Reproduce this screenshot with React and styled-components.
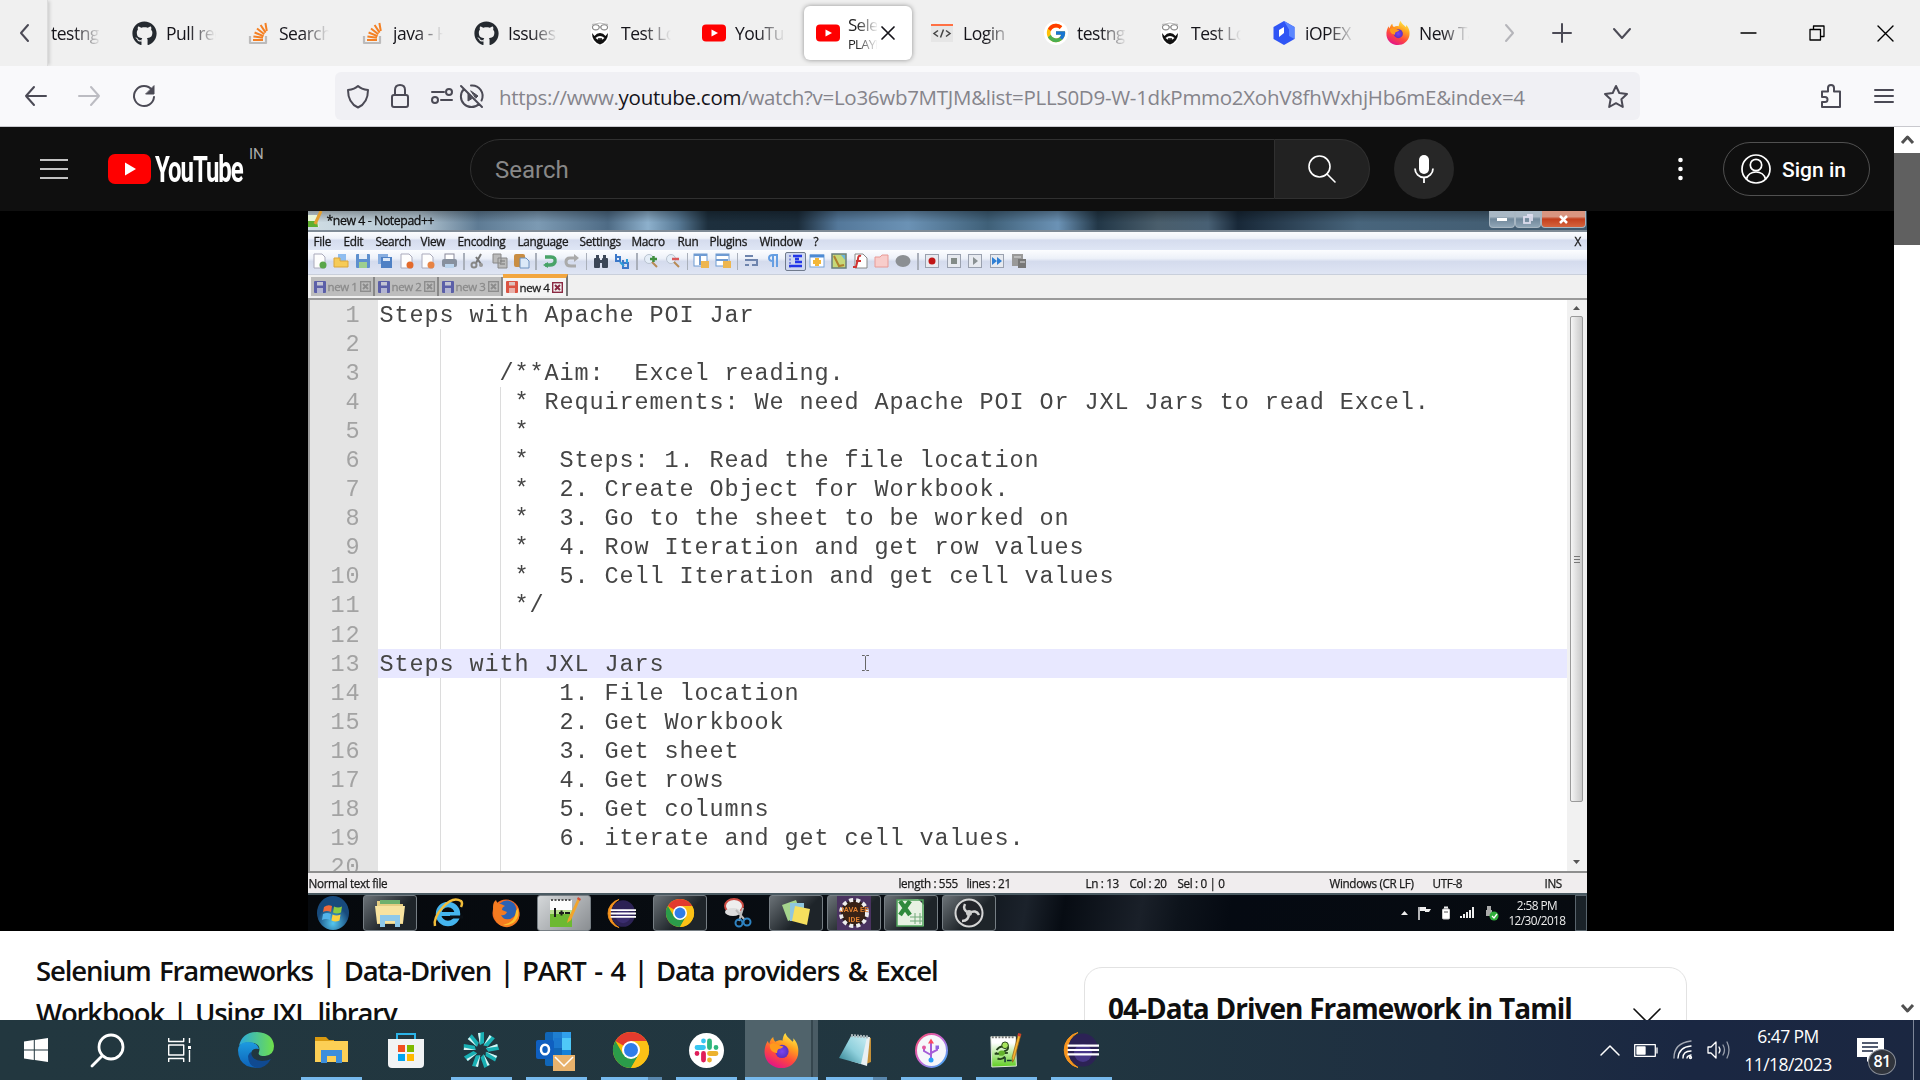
import React from "react";
import styled, { createGlobalStyle, css } from "styled-components";
import { FaGithub } from "react-icons/fa";
import { FcGoogle } from "react-icons/fc";

const UI = '"Open Sans", "Noto Sans", sans-serif';
const MONO = '"Liberation Mono", monospace';

const Global = createGlobalStyle`
  * { box-sizing: border-box; }
  html, body { margin: 0; padding: 0; overflow: hidden; background: #fff; }
  svg { display: block; flex: none; overflow: visible; }
`;

const Screen = styled.div`
  width: 1920px;
  height: 1080px;
  display: flex;
  flex-direction: column;
  overflow: hidden;
  font-family: ${UI};
`;

/* ---------- icons ---------- */
const Icon = ({ w = 24, h = w, vb = `0 0 ${w} ${h}`, stroke = "#4b4a55", sw = 2, children, ...rest }) => (
  <svg width={w} height={h} viewBox={vb} fill="none" stroke={stroke} strokeWidth={sw} strokeLinecap="round" strokeLinejoin="round" preserveAspectRatio="none" {...rest}>
    {children}
  </svg>
);

const StackIcon = () => (
  <Icon vb="0 0 24 24" strokeLinecap="butt">
    <path d="M4 15v7h16v-7" stroke="#bcbbbb" strokeWidth="2.200" strokeLinecap="butt" />
    <g stroke="#f48024" strokeWidth="2" strokeLinecap="butt">
      <path d="M7 19h10M7.400 15.400l9.600 1.400M8.600 11.500l9 3.600M11 7.500l7.300 5.700M14.600 4l5 7.600M19.400 2l1.400 8" />
    </g>
  </Icon>
);
const BeardIcon = () => (
  <svg width="24" height="24" viewBox="0 0 24 24">
    <ellipse cx="12" cy="12" rx="9.500" ry="12" fill="#fff" />
    <path d="M4 3.500q8-3 16 0" stroke="#bbb" fill="none" />
    <ellipse cx="7.800" cy="6.300" rx="3.300" ry="2.600" fill="none" stroke="#888" strokeWidth="1.100" />
    <ellipse cx="16.200" cy="6.300" rx="3.300" ry="2.600" fill="none" stroke="#888" strokeWidth="1.100" />
    <path d="M11 6h2" stroke="#888" />
    <path d="M4 12l2.500 3q2.200-3 5.500-3t5.500 3l2.500-3q0 8.500-8 11.500Q4 20.500 4 12z" fill="#111" />
    <path d="M7.500 17q4.500-4 9 0l-2 1.500h-5z" fill="#fff" />
    <path d="M10 18h4" stroke="#111" strokeWidth="1.500" />
  </svg>
);
const YtIcon = () => (
  <svg width="24" height="24" viewBox="0 0 24 24">
    <rect x="0" y="3.500" width="24" height="17" rx="4" fill="#f00" />
    <path d="M9.500 8.500l6.500 3.500-6.500 3.500z" fill="#fff" />
  </svg>
);
const CodeIcon = () => (
  <svg width="24" height="24" viewBox="0 0 24 24">
    <rect x="1" y="3" width="22" height="18" fill="#e6e6e6" />
    <rect x="1" y="3" width="22" height="2" fill="#ff7043" />
    <path d="M8 9.500L4 12.500l4 3M16 9.500L20 12.500l-4 3M13.500 8.500l-3 8" stroke="#444" strokeWidth="1.500" fill="none" />
  </svg>
);
const GoogleFav = styled.span`
  display: flex;
  width: 24px;
  height: 24px;
  border-radius: 50%;
  background: #fff;
  align-items: center;
  justify-content: center;
  flex: none;
`;
const IopexIcon = () => (
  <svg width="24" height="24" viewBox="0 0 24 24">
    <path d="M12 0l10.500 6v12L12 24 1.500 18V6z" fill="#2f55f5" />
    <path d="M12 0l10.500 6v12L17 15V8.500z" fill="#5b86ff" />
    <path d="M7 9l5-3v6l-5 4z" fill="#fff" />
  </svg>
);
const Firefox = ({ size = 24, h = size }) => (
  <svg width={size} height={h} viewBox="0 0 36 36" preserveAspectRatio="none">
    <defs>
      <linearGradient id="ffa" x1=".8" y1="0" x2=".3" y2="1">
        <stop offset="0" stopColor="#fff44f" /><stop offset=".35" stopColor="#ffa01f" />
        <stop offset=".65" stopColor="#ff4a3c" /><stop offset="1" stopColor="#e3128a" />
      </linearGradient>
      <radialGradient id="ffb"><stop offset="0" stopColor="#7b45f0" /><stop offset="1" stopColor="#5b2fc0" /></radialGradient>
    </defs>
    <path d="M22 0c1 4 5 6 7.500 9 1-1 .8-2 .5-3.500 5 5 6 11 5 17C33 31 26 36 18 36S2 31 .8 22C0 16 2 11 4 8c.3 1.500.8 2.500 1.500 3C6 8 7.500 5.500 9.500 4c0 2 1 4 2.500 5 2-1.500 5-2 7-1 .5-3 1-6 3-8z" fill="url(#ffa)" />
    <circle cx="18.500" cy="19" r="6.800" fill="url(#ffb)" />
    <path d="M6 12c3-3 7-1 10 .5 1 1 3 1 4 1-1 2-3 2.500-5 3-1.500 1-1.500 3-1.500 4-3 0-8-2-7.500-8.500z" fill="#ff9a1c" />
  </svg>
);
const Chrome = ({ size = 36 }) => (
  <svg width={size} height={size} viewBox="0 0 36 36">
    <circle cx="18" cy="18" r="18" fill="#fbbc04" />
    <path d="M18 18L2.400 9A18 18 0 0 1 33.600 9H18z" fill="#e33b2e" />
    <path d="M2.400 9A18 18 0 0 0 18 36l7.800-13.500L18 18 10.200 22.500z" fill="#2b9c4a" />
    <path d="M18 9h15.600A18 18 0 0 1 18 36l7.800-13.500z" fill="#fbc116" />
    <circle cx="18" cy="18" r="9" fill="#fff" /><circle cx="18" cy="18" r="7" fill="#2f7de9" />
  </svg>
);
const Eclipse = ({ size = 36, soft }) => (
  <svg width={size} height={size} viewBox="0 0 36 36">
    <path d="M15 .5A18 18 0 0 0 15 35.500 20 20 0 0 1 15 .5z" fill="#f7941e" stroke="#f7941e" />
    <ellipse cx="20" cy="18" rx="15" ry="16.500" fill="#2c2255" />
    <ellipse cx="20" cy="21" rx="9" ry="9" fill="#473788" opacity={soft ? 0.5 : 1} />
    <path d="M4.500 13.700h31.500M4.500 18h31.500M4.500 22.300h31.500" stroke="#fff" strokeWidth="2.200" />
  </svg>
);
const NppIcon = ({ size = 36 }) => (
  <svg width={size} height={size} viewBox="0 0 36 36">
    <defs><linearGradient id="npp" x1="0" y1="0" x2="0" y2="1"><stop offset=".2" stopColor="#fff" /><stop offset="1" stopColor="#5fce20" /></linearGradient></defs>
    <path d="M2 4h26l1 31-26 1z" fill="url(#npp)" stroke="#e6eee0" />
    <path d="M3 4.500h24" stroke="#777" strokeWidth="2" strokeDasharray="2 1.500" />
    <path d="M8 18q5-6 10-2m-2-3q3-3 4 1t-3 5q-6 5-10 2m2 6q5 2 8-2M6 22l14-1" stroke="#24421a" strokeWidth="2" fill="none" />
    <circle cx="17" cy="13" r="3.500" fill="#a8e55b" stroke="#24421a" />
    <path d="M10 20q4-3 7 0 0 5-6 4z" fill="#63b32b" />
    <path d="M34 1l-7 26-2 4-.5-5L31 1z" fill="#f5b331" stroke="#8b5a13" strokeWidth=".7" />
    <path d="M31 0l3 1-.7 3-3-1z" fill="#cf3b31" />
    <path d="M17 26v5m2-2h5" stroke="#133" strokeWidth="1.600" />
  </svg>
);
const Npp7 = () => (
  <svg width="34" height="32" viewBox="0 0 34 32">
    <path d="M3 3h22v27H3z" fill="#fdfdfd" />
    <path d="M3 13h22v17H3z" fill="#6db932" />
    <path d="M3 13h22v4H3z" fill="#b9e08f" />
    <path d="M4 3h20" stroke="#555" strokeWidth="2" strokeDasharray="2 1.500" />
    <path d="M8 11v9M12 16h5M14.500 13.500v5M18 16h5" stroke="#1c1c1c" strokeWidth="2" />
    <path d="M31 1L21 22l-1 4 4-3L33 3z" fill="#f2a52c" />
    <path d="M31 0l3 2-1 2-3-2z" fill="#d04f3c" />
  </svg>
);

/* ---------- tab strip ---------- */
const TabStrip = styled.div`
  height: 66px;
  flex: none;
  display: flex;
  align-items: center;
  background: #f0f0f0;
`;
const ScrollBack = styled.div`
  width: 48px;
  flex: none;
  height: 66px;
  display: flex;
  align-items: center;
  padding-left: 20px;
  border-right: 1px solid #dcdcdc;
  box-shadow: 3px 0 3px -1px #cfcfcf;
`;
const Tab = styled.div`
  width: ${(p) => p.$w || 114}px;
  flex: none;
  height: 66px;
  display: flex;
  align-items: center;
  gap: 9px;
  padding-left: ${(p) => (p.$w ? 3 : 12)}px;
`;
const TabLabel = styled.div`
  width: 50px;
  overflow: hidden;
  white-space: nowrap;
  font-size: 17.5px;
  letter-spacing: -0.5px;
  line-height: 28px;
  color: #15141a;
  mask-image: linear-gradient(90deg, #000 45%, transparent 100%);
`;
const ActiveTab = styled.div`
  width: 108px;
  flex: none;
  height: 54px;
  margin-right: 6px;
  padding-left: 12px;
  display: flex;
  align-items: center;
  background: #fff;
  border-radius: 6px;
  box-shadow: 0 0 5px rgba(0, 0, 0, 0.4);
`;
const ActiveText = styled.div`
  width: 29px;
  margin: 0 5px 0 8px;
  overflow: hidden;
  white-space: nowrap;
  color: #222;
  font-size: 17px;
  line-height: 21px;
  letter-spacing: -0.7px;
  mask-image: linear-gradient(90deg, #000 30%, transparent 105%);
  small {
    display: block;
    font-size: 13px;
    line-height: 18px;
  }
`;
const StripButton = styled.div`
  width: ${(p) => p.$w}px;
  margin-left: ${(p) => p.$gap || 0}px;
  flex: none;
  height: 66px;
  display: flex;
  align-items: center;
  justify-content: center;
`;

const leftTabs = [
  [<FaGithub size={25} color="#24292f" />, "Pull requests"],
  [<StackIcon />, "Search"],
  [<StackIcon />, "java - H"],
  [<FaGithub size={25} color="#24292f" />, "Issues ·"],
  [<BeardIcon />, "Test Login"],
  [<YtIcon />, "YouTube"],
];
const rightTabs = [
  [<CodeIcon />, "Login |"],
  [<GoogleFav><FcGoogle size={22} /></GoogleFav>, "testng m"],
  [<BeardIcon />, "Test Login"],
  [<IopexIcon />, "iOPEX T"],
  [<Firefox />, "New Tab"],
];

const Tabs = () => (
  <TabStrip>
    <ScrollBack><Icon w={9} h={18} vb="0 0 9 18"><path d="M8 1L1 9l7 8" /></Icon></ScrollBack>
    <Tab $w={72}><TabLabel>testng</TabLabel></Tab>
    {leftTabs.map(([icon, t], i) => <Tab key={i}>{icon}<TabLabel>{t}</TabLabel></Tab>)}
    <ActiveTab>
      <YtIcon />
      <ActiveText>Selenium<small>PLAYING</small></ActiveText>
      <Icon w={12} stroke="#15141a" sw={1.700}><path d="M0 0l12 12M12 0L0 12" /></Icon>
    </ActiveTab>
    {rightTabs.map(([icon, t], i) => <Tab key={i}>{icon}<TabLabel>{t}</TabLabel></Tab>)}
    <StripButton $w={42}><Icon w={9} h={18} stroke="#b5b5ba"><path d="M1 1l7 8-7 8" /></Icon></StripButton>
    <StripButton $w={64}><Icon w={18}><path d="M9 0v18M0 9h18" /></Icon></StripButton>
    <StripButton $w={56}><Icon w={18} h={9}><path d="M1 0l8 9 8-9" /></Icon></StripButton>
    <StripButton $w={69} $gap={64}><Icon w={15} h={2} stroke="#000" sw={1.300}><path d="M0 1h15" /></Icon></StripButton>
    <StripButton $w={68}><Icon w={14} stroke="#000" sw={1.300}><path d="M0 3.500h10.500V14H0zM3.500 3.500V0H14v10.500h-3.500" /></Icon></StripButton>
    <StripButton $w={69}><Icon w={15} stroke="#000" sw={1.400}><path d="M0 0l15 15M15 0L0 15" /></Icon></StripButton>
  </TabStrip>
);

/* ---------- navigation bar ---------- */
const NavBar = styled.div`
  height: 61px;
  flex: none;
  display: flex;
  align-items: center;
  background: #f9f9fb;
  border-bottom: 1px solid #c9c9ce;
  padding: 0 27px 0 25px;
`;
const NavButtons = styled.div`
  width: 310px;
  display: flex;
  align-items: center;
  gap: 33px;
`;
const UrlBar = styled.div`
  width: 1305px;
  height: 48px;
  display: flex;
  align-items: center;
  padding: 0 12px;
  background: #f0f0f4;
  border-radius: 6px;
`;
const UrlIcons = styled.div`
  width: 152px;
  display: flex;
  align-items: center;
  gap: 22px;
  svg:last-child { margin-left: -15px; }
`;
const UrlText = styled.div`
  flex: 1;
  padding-top: 2px;
  white-space: nowrap;
  font-size: 20.5px;
  line-height: 28px;
  letter-spacing: -0.28px;
  color: #85848b;
  b { font-weight: 400; color: #15141a; }
`;
const NavRight = styled.div`
  flex: 1;
  display: flex;
  align-items: center;
  justify-content: flex-end;
  gap: 34px;
`;

const Navigation = () => (
  <NavBar>
    <NavButtons>
      <Icon w={21} h={18}><path d="M21 9H1M9 0L1 9l8 9" /></Icon>
      <Icon w={21} h={18} stroke="#bcbcc2"><path d="M0 9h20M12 0l8 9-8 9" /></Icon>
      <Icon w={22} h={22}><path d="M19 5A10 10 0 1 0 21 12" /><path d="M21 1v8h-8z" fill="#4b4a55" strokeWidth="1" /></Icon>
    </NavButtons>
    <UrlBar>
      <UrlIcons>
        <Icon w={22} h={23}><path d="M11 1c3 3 6 3.500 10 4 0 8-2 14-10 17.500C3 19 1 13 1 5c4-.5 7-1 10-4z" /></Icon>
        <Icon w={18} h={24}><rect x="1" y="11" width="16" height="12" rx="2" /><path d="M4 11V6q0-5 5-5t5 5v5" /></Icon>
        <Icon w={22} h={16}><path d="M1 4h12M10 12h11" /><circle cx="18" cy="4" r="3" /><circle cx="4" cy="12" r="3" /></Icon>
        <Icon w={24} h={24}><path d="M4 5a10.500 10.500 0 0 0 15 15M11 1.500a10.500 10.500 0 0 1 10.500 15M1 2l21 21" /><path d="M8 9v8l4-2.500M11 7l7 5-2 2z" fill="#4b4a55" strokeWidth="1" /></Icon>
      </UrlIcons>
      <UrlText>https://www.<b>youtube.com</b>/watch?v=Lo36wb7MTJM&amp;list=PLLS0D9-W-1dkPmmo2XohV8fhWxhjHb6mE&amp;index=4</UrlText>
      <Icon w={24} h={23}><path d="M12 1l3.300 7 7.700 1-5.600 5.300L18.800 22 12 18.200 5.200 22l1.400-7.700L1 9l7.700-1z" /></Icon>
    </UrlBar>
    <NavRight>
      <Icon w={20} h={24}><path d="M1 9V7.500h6V4q0-3 3-3t3 3v3.500h6V23H1v-5h3q2.500 0 2.500-2.500T4 13H1V9" /></Icon>
      <Icon w={18} h={14}><path d="M0 1h18M0 7h18M0 13h18" /></Icon>
    </NavRight>
  </NavBar>
);

/* ---------- youtube header ---------- */
const Content = styled.div`
  height: 893px;
  flex: none;
  display: flex;
`;
const Page = styled.div`
  width: 1894px;
  height: 893px;
  overflow: hidden;
`;
const Masthead = styled.div`
  height: 84px;
  display: flex;
  align-items: center;
  padding: 0 24px 0 40px;
  background: #0f0f0f;
  font-family: Roboto, sans-serif;
`;
const Brand = styled.div`
  width: 362px;
  margin-left: 40px;
  display: flex;
  align-items: center;
`;
const Wordmark = styled.div`
  width: 98px;
  padding-left: 4px;
  span {
    display: block;
    width: 140px;
    padding-top: 1px;
    font-size: 36px;
    font-weight: 700;
    line-height: 40px;
    letter-spacing: -1.5px;
    color: #fff;
    transform: scaleX(0.665);
    transform-origin: left;
  }
`;
const Region = styled.div`
  align-self: flex-start;
  margin-top: -2px;
  font-size: 15px;
  line-height: 14px;
  color: #aaa;
`;
const SearchInput = styled.div`
  width: 805px;
  height: 60px;
  padding-left: 24px;
  line-height: 60px;
  font-size: 24px;
  color: #888;
  background: #121212;
  border: 1px solid #303030;
  border-radius: 30px 0 0 30px;
`;
const SearchButton = styled.div`
  width: 95px;
  height: 60px;
  display: flex;
  align-items: center;
  justify-content: center;
  background: #222;
  border: 1px solid #303030;
  border-left: 0;
  border-radius: 0 30px 30px 0;
`;
const Mic = styled.div`
  width: 60px;
  height: 60px;
  margin: 0 auto 0 24px;
  border-radius: 50%;
  background: #272727;
  display: flex;
  align-items: center;
  justify-content: center;
`;
const SignIn = styled.div`
  width: 147px;
  height: 54px;
  margin-left: 40px;
  padding-left: 17px;
  display: flex;
  align-items: center;
  gap: 11px;
  border: 1px solid #505050;
  border-radius: 27px;
  font-size: 21px;
  font-weight: 500;
  line-height: 28px;
  color: #fff;
  white-space: nowrap;
  span { padding-top: 2px; }
`;

const Header = () => (
  <Masthead>
    <Icon w={28} h={20} stroke="#fff" sw={1.700} strokeLinecap="butt"><path d="M0 1h28M0 10h28M0 19h28" /></Icon>
    <Brand>
      <svg width="43" height="30" viewBox="0 0 43 30"><rect width="43" height="30" rx="7" fill="#f00" /><path d="M17 8.500L28 15l-11 6.500z" fill="#fff" /></svg>
      <Wordmark><span>YouTube</span></Wordmark>
      <Region>IN</Region>
    </Brand>
    <SearchInput>Search</SearchInput>
    <SearchButton><Icon w={28} h={28} stroke="#fff" sw={1.600}><circle cx="11.500" cy="11.500" r="10.500" /><path d="M19 19l8 8" /></Icon></SearchButton>
    <Mic>
      <svg width="20" height="28" viewBox="0 0 20 28"><rect x="5" y="0" width="10" height="19" rx="5" fill="#fff" /><path d="M1 13.500a9 9 0 0 0 18 0M10 22.500V28" stroke="#fff" strokeWidth="1.800" fill="none" /></svg>
    </Mic>
    <svg width="5" height="24" viewBox="0 0 5 24" fill="#fff"><circle cx="2.500" cy="3" r="2.300" /><circle cx="2.500" cy="12" r="2.300" /><circle cx="2.500" cy="21" r="2.300" /></svg>
    <SignIn>
      <Icon w={30} stroke="#fff" sw={1.700}><circle cx="15" cy="15" r="14" /><circle cx="15" cy="11" r="5.700" /><path d="M5.500 25q2-7 9.500-7t9.500 7" /></Icon>
      <span>Sign in</span>
    </SignIn>
  </Masthead>
);

/* ---------- video: notepad++ ---------- */
const Stage = styled.div`
  height: 720px;
  background: #000;
  display: flex;
  justify-content: center;
`;
const Frame = styled.div`
  width: 1279px;
  height: 720px;
  overflow: hidden;
  display: flex;
  flex-direction: column;
  background: #fff;
  filter: blur(0.5px);
  color: #1a1a1a;
`;
const AeroTitle = styled.div`
  height: 21px;
  flex: none;
  display: flex;
  align-items: flex-start;
  font-size: 12.3px;
  line-height: 20px;
  letter-spacing: -0.42px;
  color: #111;
  -webkit-text-stroke: 0.3px;
  border-bottom: 2px solid #7f8b96;
  background:
    linear-gradient(180deg, rgba(0, 0, 0, 0.3), transparent 60%),
    linear-gradient(90deg, #cfdde4 0, #b5c7d3 110px, #5e7b94 170px, #7c9ab3 230px, #4e6b85 300px, #8db0cc 340px, #587a96 370px, #1d2f3d 400px, #1c2d3b 490px, #54789a 530px, #6b92b5 600px, #3f6078 680px, #6b92b5 750px, #223747 790px, #4a5e6c 850px, #486074 900px, #182838 930px, #48657c 1050px, #40596d 1279px);
`;
const WinTitle = styled.span`
  width: 904px;
  padding-left: 5px;
`;
const WinButton = styled.span`
  width: ${(p) => p.$w}px;
  height: 17px;
  border: 1px solid #a7b6c2;
  border-top: 0;
  border-radius: 0 0 4px 4px;
  display: flex;
  align-items: center;
  justify-content: center;
  background: ${(p) => (p.$red ? "linear-gradient(#d99580 35%, #c33f1d 50%, #d5643e)" : "linear-gradient(#a9b8c5 35%, #71889b 50%, #8fa5b6)")};
`;
const WinButtons = styled.span`
  display: flex;
  margin-left: auto;
  padding-right: 1px;
`;
const MenuBar = styled.div`
  height: 18px;
  flex: none;
  display: flex;
  padding-left: 6px;
  font-size: 11.8px;
  line-height: 18px;
  letter-spacing: -0.3px;
  -webkit-text-stroke: 0.3px;
  background: linear-gradient(#fbfcfe 0, #eef2f9 35%, #d5dcee 45%, #dfe6f5);
`;
const MenuItem = styled.span`
  width: ${(p) => p.$w}px;
  margin-left: ${(p) => (p.$end ? "auto" : 0)};
  flex: none;
`;
const ToolBar = styled.div`
  height: 25px;
  flex: none;
  display: flex;
  align-items: center;
  padding: 0 0 2px 1.500px;
  background: linear-gradient(#fcfdff 0, #edf1f9 35%, #d4dbed 48%, #dfe5f4);
  border-bottom: 1px solid #c9cfdb;
`;
const ToolSlot = styled.span`
  width: 21.6px;
  height: 19px;
  flex: none;
  display: flex;
  align-items: center;
  justify-content: center;
  ${(p) => p.$on && css`border: 1.500px solid #707a8c; border-radius: 2px; background: #cfd8ef;`}
`;
const ToolSep = styled.span`
  width: 1.500px;
  height: 17px;
  margin: 0 2.900px;
  background: #a9afba;
`;
const FileTabs = styled.div`
  height: 25px;
  flex: none;
  display: flex;
  align-items: flex-end;
  padding: 0 0 2px 3px;
  background: #f0f0f0;
  border-bottom: 2px solid #9a9a9a;
`;
const FileTab = styled.div`
  width: ${(p) => p.$w}px;
  height: ${(p) => (p.$on ? 22 : 19)}px;
  display: flex;
  align-items: center;
  padding-left: 3px;
  gap: 2px;
  font-size: 11.5px;
  letter-spacing: -0.4px;
  -webkit-text-stroke: 0.3px;
  color: ${(p) => (p.$on ? "#222" : "#8a8a8a")};
  background: ${(p) => (p.$on ? "#f4f4f4" : "#bdbdbd")};
  border-top: ${(p) => (p.$on ? "4px solid #f2a640" : "0")};
  border-right: 2px solid ${(p) => (p.$on ? "#777" : "#888")};
  white-space: nowrap;
`;
const Editor = styled.div`
  height: 571px;
  flex: none;
  display: flex;
  overflow: hidden;
  border-left: 2px solid #9b9b9b;
  font-family: ${MONO};
`;
const Lines = styled.div`
  width: 1257px;
`;
const Line = styled.div`
  height: 29.05px;
  display: flex;
  white-space: pre;
  font-size: 23.5px;
  line-height: 31px;
  letter-spacing: 0.9px;
  color: #454545;
`;
const Num = styled.div`
  width: 68px;
  padding-right: 17px;
  text-align: right;
  color: #a3a3a3;
  background: #e4e4e4;
`;
const Code = styled.div`
  flex: 1;
  padding-left: 2px;
  background-color: ${(p) => (p.$current ? "#e8e8ff" : "#fff")};
  background-image: ${(p) => (p.$guides > 0 ? "linear-gradient(#dcdcdc, #dcdcdc)" : "none")}${(p) => (p.$guides > 1 ? ", linear-gradient(#dcdcdc, #dcdcdc)" : "")};
  background-size: 1px 100%;
  background-repeat: no-repeat;
  background-position: 62px 0, 122px 0;
`;
const Caret = styled.span`
  margin-left: 196px;
  display: inline-block;
  vertical-align: 0;
`;
const EdScroll = styled.div`
  width: 20px;
  padding: 6px 3px 7px;
  display: flex;
  flex-direction: column;
  align-items: center;
  background: #f1f1f1;
`;
const EdThumb = styled.div`
  width: 13px;
  height: 486px;
  margin: 6px 0 auto;
  display: flex;
  align-items: center;
  justify-content: center;
  border: 1px solid #9a9a9a;
  border-radius: 2px;
  background: linear-gradient(90deg, #f5f5f5, #dadada 60%, #cacaca);
`;
const StatusBar = styled.div`
  height: 22px;
  flex: none;
  display: flex;
  border-top: 2px solid #8e8e8e;
  background: #f0edee;
  font-size: 11.7px;
  line-height: 20px;
  letter-spacing: -0.35px;
  -webkit-text-stroke: 0.25px;
  white-space: nowrap;
`;
const Status = styled.span`
  width: ${(p) => p.$w}px;
  padding-left: 1px;
  flex: none;
`;

const toolIcons = {
  doc: (c) => <svg width="15" height="16"><path d="M2 1h8l3 3v11H2z" fill="#fdfdfd" stroke="#aab" />{c && <circle cx="11" cy="12" r="3.500" fill={c} />}</svg>,
  open: <svg width="16" height="16"><path d="M5 1h8v8H5z" fill="#8fbdf0" /><path d="M1 5h6v3h8v6H1z" fill="#f6cb57" stroke="#dba53a" /></svg>,
  save: <svg width="16" height="16"><rect x="1" y="1" width="14" height="14" rx="1" fill="#5d8fce" /><rect x="4" y="1" width="8" height="5" fill="#e6eef8" /><rect x="4" y="9" width="8" height="6" fill="#9dcf8f" /></svg>,
  saveAll: <svg width="16" height="16"><rect x="1" y="1" width="10" height="10" fill="#88aee0" /><rect x="4" y="4" width="11" height="11" fill="#4e80c4" /><rect x="6" y="5" width="7" height="3" fill="#dce8f7" /></svg>,
  print: <svg width="17" height="16"><rect x="4" y="1" width="9" height="6" fill="#fff" stroke="#889" /><rect x="1" y="6" width="15" height="8" rx="2" fill="#87909e" /><path d="M4 11h9v4H4z" fill="#bcd5ee" /></svg>,
  cut: <svg width="16" height="16"><path d="M11 1L6 10M6 4l5 7" stroke="#777" strokeWidth="2" /><circle cx="4" cy="12" r="2.500" fill="none" stroke="#888" strokeWidth="2" /><circle cx="11" cy="12" r="2" fill="#999" /></svg>,
  copy: <svg width="16" height="16"><path d="M1 1h8v9H1zM6 5h9v10H6z" fill="#bbb" stroke="#888" /><path d="M8 8h5M8 11h5" stroke="#777" /></svg>,
  paste: <svg width="17" height="16"><rect x="1" y="1" width="11" height="13" rx="2" fill="#c98d42" /><path d="M7 5h6l3 3v7H7z" fill="#dbe9f8" stroke="#6d92bf" /></svg>,
  undo: <svg width="16" height="16"><path d="M3 4h6q5 0 4 5-1 3-5 3H3" stroke="#48a368" strokeWidth="3.500" fill="none" /><path d="M6 15l-5-3 5-3z" fill="#48a368" /></svg>,
  redo: <svg width="16" height="16"><path d="M12 5H6Q2 5 2 9t5 4h5" stroke="#aaa" strokeWidth="3" fill="none" /><path d="M10 1l5 4-5 4z" fill="#aaa" /></svg>,
  find: <svg width="16" height="16" fill="#3b4657"><rect x="1" y="5" width="6" height="10" rx="1" /><rect x="9" y="5" width="6" height="10" rx="1" /><path d="M3 2h3v4H3zM10 2h3v4h-3zM6 7h4v3H6z" /></svg>,
  replace: <svg width="17" height="16"><path d="M2 1v7h4V4H2M9 7v8h5v-5H9" stroke="#3b78c9" strokeWidth="2" fill="none" /><path d="M6 9l4 4M13 6v4" stroke="#2d9fd8" strokeWidth="2" /></svg>,
  zoom: (c) => <svg width="16" height="16"><circle cx="6" cy="6" r="4.500" fill="#e5eef8" stroke="#b9c3d0" /><path d="M9 9l5 5" stroke="#b78a53" strokeWidth="2" />{c === "#d9595b" ? <path d="M7 6h7" stroke={c} strokeWidth="2.500" /> : <path d="M7 6h7M10.500 3v6" stroke={c} strokeWidth="2.500" />}</svg>,
  sync: <svg width="17" height="16"><rect x="1" y="1" width="13" height="12" fill="#fff" stroke="#6f9bd2" /><path d="M1 2h13M7 2v10" stroke="#6f9bd2" strokeWidth="2" /><rect x="8" y="8" width="8" height="7" fill="#eeb64f" /></svg>,
  sync2: <svg width="17" height="16"><rect x="1" y="1" width="13" height="12" fill="#fff" stroke="#6f9bd2" /><path d="M1 2h13M1 7h12" stroke="#6f9bd2" strokeWidth="2" /><rect x="8" y="8" width="8" height="7" fill="#eeb64f" /></svg>,
  wrap: <svg width="17" height="16"><path d="M1 3h8M1 7h12v5H8M1 12h4" stroke="#6e84ad" strokeWidth="2" fill="none" /></svg>,
  para: <svg width="12" height="16"><path d="M5 2v12M9 2v12M10 2H5Q1 2 1 5t4 3" stroke="#659ee2" strokeWidth="2" fill="none" /></svg>,
  indent: <svg width="16" height="15"><path d="M6 2h9M8 5h4M8 8h7M2 12h13" stroke="#2337e8" strokeWidth="2.300" /><path d="M3 1v13" stroke="#3945c8" strokeDasharray="2 1.500" /></svg>,
  udl: <svg width="16" height="16"><rect x="1" y="2" width="14" height="12" fill="#fff" stroke="#76a3d8" /><path d="M1 3h14" stroke="#4d8ad4" strokeWidth="3" /><path d="M8 5v8M4 9h8" stroke="#f3b739" strokeWidth="4" /></svg>,
  map: <svg width="16" height="16"><rect x="1" y="1" width="14" height="14" fill="#c7d878" stroke="#687d7b" strokeWidth="1.500" /><path d="M3 3l5 10 5-1" stroke="#af812e" strokeWidth="2" fill="none" /><path d="M10 2h4v5z" fill="#6cb6d9" /></svg>,
  func: <svg width="16" height="16"><path d="M3 1h8l4 4v10H3z" fill="#fff" stroke="#888" /><path d="M9 3q-3-1-3 3l-2 8H1M4 8h5" stroke="#cf3434" strokeWidth="2" fill="none" /></svg>,
  folder: <svg width="16" height="16"><path d="M1 4h5l2-2h6v12H1z" fill="#f8cdcb" stroke="#e89a96" /></svg>,
  eye: <svg width="16" height="16"><ellipse cx="8" cy="8" rx="7.500" ry="6" fill="#8b8f93" /></svg>,
  mac: (el) => <svg width="14" height="14"><rect x=".5" y=".5" width="13" height="13" fill="#e7eaf0" stroke="#9aa1af" />{el}</svg>,
  list: <svg width="16" height="16"><rect x="1" y="1" width="11" height="12" fill="#999" /><rect x="7" y="6" width="8" height="9" fill="#777" /><path d="M3 4h7M9 9h5" stroke="#ddd" /></svg>,
};
const T = toolIcons;
const tools = [
  T.doc("#5aa64a"), T.open, T.save, T.saveAll, T.doc("#e36a2c"), T.doc("#e78344"), T.print, 0,
  T.cut, T.copy, T.paste, 0, T.undo, T.redo, 0, T.find, T.replace, 0, T.zoom("#3f8f3f"), T.zoom("#d9595b"), 0,
  T.sync, T.sync2, 0, T.wrap, T.para, T.indent, T.udl, T.map, T.func, T.folder, T.eye, 0,
  T.mac(<circle cx="7" cy="7" r="3.500" fill="#c01515" />), T.mac(<rect x="4" y="4" width="6" height="6" fill="#838b87" />),
  T.mac(<path d="M5 3l5 4-5 4z" fill="#8a9193" />), T.mac(<path d="M2 3l5 4-5 4zM7 3l5 4-5 4z" fill="#2f7fd4" />), T.list,
];
const menu = [["File", 30], ["Edit", 32], ["Search", 45], ["View", 37], ["Encoding", 60], ["Language", 62], ["Settings", 52], ["Macro", 46], ["Run", 32], ["Plugins", 50], ["Window", 54], ["?", 20]];
const codeLines = [
  "Steps with Apache POI Jar",
  "",
  "        /**Aim:  Excel reading.",
  "         * Requirements: We need Apache POI Or JXL Jars to read Excel.",
  "         *",
  "         *  Steps: 1. Read the file location",
  "         *  2. Create Object for Workbook.",
  "         *  3. Go to the sheet to be worked on",
  "         *  4. Row Iteration and get row values",
  "         *  5. Cell Iteration and get cell values",
  "         */",
  "",
  "Steps with JXL Jars",
  "            1. File location",
  "            2. Get Workbook",
  "            3. Get sheet",
  "            4. Get rows",
  "            5. Get columns",
  "            6. iterate and get cell values.",
  "",
];
const guidesFor = (i) => (i === 0 || i === 12 ? 0 : i < 3 ? 1 : 2);
const Floppy = ({ c }) => <svg width="12" height="12"><rect width="12" height="12" rx="1" fill={c} /><rect x="3" y="1" width="6" height="3.500" fill="#ddd" opacity=".8" /><rect x="3" y="7" width="6" height="5" fill="#eee" opacity=".6" /></svg>;
const TabX = ({ c }) => <svg width="11" height="11" fill="none" stroke={c} strokeWidth="1.400"><rect x=".7" y=".7" width="9.600" height="9.600" /><path d="M3 3l5 5M8 3l-5 5" strokeWidth="2" /></svg>;

/* ---------- video: windows 7 taskbar ---------- */
const Win7Bar = styled.div`
  height: 38px;
  flex: none;
  display: flex;
  align-items: center;
  border-top: 2px solid #4a5a62;
  background: linear-gradient(100deg, #06090d 0, #090e14 50%, #1b222b 56%, #070c13 59%, #1a2029 65%, #0d131b 68%, #050a12 72%, #070b10);
`;
const Win7Apps = styled.div`
  display: flex;
  gap: 3.900px;
  margin-left: -2px;
`;
const Win7App = styled.div`
  width: 54px;
  height: 36px;
  flex: none;
  display: flex;
  align-items: center;
  justify-content: center;
  ${(p) => p.$box && css`
    border: 1px solid #767e84;
    border-radius: 3px;
    background: ${p.$box === 2 ? "linear-gradient(135deg, #d5d8da, #8a8e92)" : "linear-gradient(135deg, #6b7277, #1e2429 60%)"};
  `}
`;
const Win7Tray = styled.div`
  margin-left: auto;
  display: flex;
  align-items: center;
  gap: 9px;
  color: #eee;
  font-size: 11.8px;
  line-height: 15.500px;
  letter-spacing: -0.55px;
  text-align: center;
`;
const PeekButton = styled.div`
  width: 12px;
  height: 36px;
  border: 1px solid #59646c;
  background: #1a2228;
`;

const Orb = () => <svg width="32" height="34" viewBox="0 0 32 34"><defs><radialGradient id="orb" cy=".8"><stop offset="0" stopColor="#56c8f0" /><stop offset="1" stopColor="#174a7c" /></radialGradient></defs><ellipse cx="16" cy="17" rx="16" ry="17" fill="url(#orb)" /><path d="M7 11q4-3 8-1l-1 6q-4-2-8 0z" fill="#f0693a" /><path d="M17 10.500q4 2 8 0l-1 6q-4 2-8 0z" fill="#8ccb41" /><path d="M6 18q4-2 8 0l-1 6q-4-2-8 0z" fill="#53b3ea" /><path d="M15.500 18.500q4 2 8 0l-1 6q-4 2-8 0z" fill="#fbd13e" /></svg>;
const Folder7 = () => <svg width="32" height="30" viewBox="0 0 32 30"><path d="M3 3h10l2 3h14v20H3z" fill="#e5cd82" /><path d="M6 2h20v4H6z" fill="#6fb06d" /><path d="M1 8h30l-2 17H3z" fill="#f8e3a0" /><path d="M6 17h20v12h-5v-6H11v6H6z" fill="#8ec9ea" /></svg>;
const IE = () => <svg width="30" height="30" viewBox="0 0 30 30"><circle cx="15" cy="16" r="9.500" fill="none" stroke="#45b5ee" strokeWidth="5.500" /><path d="M8 16h17" stroke="#45b5ee" strokeWidth="4" /><path d="M17 19h13" stroke="#0b1016" strokeWidth="3" /><path d="M2 28Q0 20 10 9T28 3q2 2 0 6" stroke="#f2bd3a" strokeWidth="2.500" fill="none" /></svg>;
const Firefox7 = () => <svg width="28" height="30" viewBox="0 0 28 30"><circle cx="14" cy="15" r="13.500" fill="#f26a21" /><circle cx="15" cy="12" r="9.500" fill="#2b62b5" /><path d="M1 9Q1 4 4 2q1 4 5 4l4 2q-3 1-3 4l5 2q-2 4-6 3 3 6 10 4 6-2 6-11 5 7 0 14-5 6-12 5Q1 27 1 9z" fill="#f47b20" /><path d="M26 10q2 10-5 15-5 3-10 2 12-2 13-14z" fill="#fbc02d" /></svg>;
const Snip = () => <svg width="28" height="30" viewBox="0 0 28 30"><ellipse cx="10" cy="8" rx="9" ry="7" fill="#eee" stroke="#cc4a42" strokeWidth="2" /><ellipse cx="9" cy="14" rx="8" ry="4" fill="#ddd" /><path d="M12 12l9 10M19 10l-4 13" stroke="#bbb" strokeWidth="2" /><circle cx="15" cy="25" r="3.500" fill="none" stroke="#2e83c2" strokeWidth="2" /><circle cx="23" cy="24" r="3.500" fill="none" stroke="#2e83c2" strokeWidth="2" /></svg>;
const Sticky = () => <svg width="32" height="30" viewBox="0 0 32 30"><path d="M2 7l14-5 6 16-14 5z" fill="#a5d48d" /><path d="M10 5h14v18H10z" fill="#8fc6de" /><path d="M15 8l15 3-3 16-15-4z" fill="#f6df5e" /></svg>;
const GearBox = () => <svg width="34" height="34" viewBox="0 0 34 34"><rect width="34" height="34" fill="#4a3360" /><circle cx="17" cy="17" r="13" fill="#2b1d17" stroke="#eee" strokeWidth="4" strokeDasharray="4 3" /><circle cx="17" cy="17" r="11" fill="#392316" /><text x="17" y="16" fontSize="7.500" fontWeight="700" textAnchor="middle" fill="#de7f2f" fontFamily="Roboto">JAVA EE</text><text x="17" y="26" fontSize="7.500" fontWeight="700" textAnchor="middle" fill="#de7f2f" fontFamily="Roboto">IDE</text></svg>;
const Excel = () => <svg width="30" height="30" viewBox="0 0 30 30"><path d="M1 2l21-1 6 6v21H1z" fill="#e7f2e3" /><path d="M4 3l10 14M14 3L4 17" stroke="#2f8a3d" strokeWidth="4.500" /><path d="M1 2h26v26H1z" fill="none" stroke="#4fa35b" strokeWidth="1.500" /><path d="M14 19h13M14 23h13M19 15v11M24 15v11" stroke="#71a978" /></svg>;
const Obs = () => <svg width="30" height="30" viewBox="0 0 30 30"><circle cx="15" cy="15" r="13.500" fill="#23252a" stroke="#d5d5d5" strokeWidth="2" /><path d="M15 15Q8 12 11 6M15 15q7-4 10 2M15 15q0 8-7 8" stroke="#d5d5d5" strokeWidth="2.500" fill="none" /><circle cx="15" cy="15" r="3" fill="#ccc" /></svg>;

const win7Apps = [[<Orb />], [<Folder7 />, 1], [<IE />], [<Firefox7 />], [<Npp7 />, 2], [<Eclipse size={29} soft />], [<Chrome size={28} />, 1], [<Snip />], [<Sticky />, 1], [<GearBox />, 1], [<Excel />, 1], [<Obs />, 1]];

const Video = () => (
  <Stage>
    <Frame>
      <AeroTitle>
        <svg width="14" height="18" viewBox="0 0 14 18"><path d="M0 4h9l2 12H0z" fill="#e9f5d8" /><path d="M0 10h9l1 6H0z" fill="#5fae2f" /><path d="M13 0L7 13" stroke="#e4a030" strokeWidth="3" /></svg>
        <WinTitle>*new 4 - Notepad++</WinTitle>
        <WinButtons>
          <WinButton $w={26}><svg width="10" height="4"><rect width="10" height="3" y="1" fill="#fff" /></svg></WinButton>
          <WinButton $w={26}><svg width="10" height="10" fill="none" stroke="#dde" strokeWidth="1.800"><rect x="1" y="3" width="6" height="6" /><path d="M4 1h5v6" /></svg></WinButton>
          <WinButton $w={45} $red><svg width="9" height="9" stroke="#fff" strokeWidth="2.500"><path d="M1 1l7 7M8 1L1 8" /></svg></WinButton>
        </WinButtons>
      </AeroTitle>
      <MenuBar>
        {menu.map(([t, w]) => <MenuItem key={t} $w={w}>{t}</MenuItem>)}
        <MenuItem $w={12} $end>X</MenuItem>
      </MenuBar>
      <ToolBar>
        {tools.map((t, i) => (t === 0 ? <ToolSep key={i} /> : <ToolSlot key={i} $on={t === T.indent}>{t}</ToolSlot>))}
      </ToolBar>
      <FileTabs>
        {[1, 2, 3].map((n) => <FileTab key={n} $w={64}><Floppy c="#5b5fa8" />new {n}<TabX c="#8d8d8d" /></FileTab>)}
        <FileTab $w={65} $on><Floppy c="#dc5443" />new 4<TabX c="#8b2942" /></FileTab>
      </FileTabs>
      <Editor>
        <Lines>
          {codeLines.map((t, i) => (
            <Line key={i}>
              <Num>{i + 1}</Num>
              <Code $current={i === 12} $guides={guidesFor(i)}>
                {t}
                {i === 12 && <Caret><svg width="9" height="16" fill="none" stroke="#666"><path d="M1 .5h2.500l1 1 1-1H8M4.500 1.500v13M1 15.500h2.500l1-1 1 1H8" /></svg></Caret>}
              </Code>
            </Line>
          ))}
        </Lines>
        <EdScroll>
          <svg width="7" height="4"><path d="M0 4l3.500-4L7 4z" fill="#555" /></svg>
          <EdThumb><svg width="6" height="8" stroke="#777"><path d="M0 1.500h6M0 4.500h6M0 7.500h6" /></svg></EdThumb>
          <svg width="7" height="4"><path d="M0 0l3.500 4L7 0z" fill="#555" /></svg>
        </EdScroll>
      </Editor>
      <StatusBar>
        <Status $w={590}>Normal text file</Status>
        <Status $w={68}>length : 555</Status>
        <Status $w={119}>lines : 21</Status>
        <Status $w={44}>Ln : 13</Status>
        <Status $w={48}>Col : 20</Status>
        <Status $w={152}>Sel : 0 | 0</Status>
        <Status $w={103}>Windows (CR LF)</Status>
        <Status $w={112}>UTF-8</Status>
        <Status $w={30}>INS</Status>
      </StatusBar>
      <Win7Bar>
        <Win7Apps>
          {win7Apps.map(([icon, box], i) => <Win7App key={i} $box={box}>{icon}</Win7App>)}
        </Win7Apps>
        <Win7Tray>
          <svg width="7" height="4"><path d="M0 4l3.500-4L7 4z" fill="#eee" /></svg>
          <svg width="15" height="14"><path d="M2 1v13" stroke="#eee" strokeWidth="1.500" /><path d="M3 1h6v2h5l-2 3H8V5H3z" fill="#eee" /></svg>
          <svg width="10" height="14"><rect x="1.500" y="3" width="7" height="10" rx="1" fill="#fff" stroke="#ccc" /><path d="M3 1.500h4" stroke="#eee" strokeWidth="2" /><path d="M3 6h4" stroke="#555" /></svg>
          <svg width="15" height="12" fill="#eee"><path d="M0 9h2v2H0zM3 7h2v4H3zM6 5h2v6H6zM9 3h2v8H9zM12 0h2v11h-2z" /></svg>
          <svg width="15" height="15"><path d="M3 0h4v4h1v6H2V4h1z" fill="#aaa" /><circle cx="10" cy="10" r="4.500" fill="#2fae3a" /><path d="M8 10l2 2 3-4" stroke="#fff" fill="none" strokeWidth="1.300" /></svg>
          <div>2:58 PM<br />12/30/2018</div>
          <PeekButton />
        </Win7Tray>
      </Win7Bar>
    </Frame>
  </Stage>
);

/* ---------- below the player ---------- */
const Below = styled.div`
  height: 89px;
  display: flex;
  align-items: flex-start;
  overflow: hidden;
  padding-left: 36px;
  background: #fff;
  color: #0f0f0f;
`;
const VideoTitle = styled.div`
  width: 1048px;
  padding-top: 19px;
  font-size: 27.5px;
  font-weight: 600;
  line-height: 42px;
  letter-spacing: -1.1px;
  word-spacing: 2.4px;
  white-space: nowrap;
`;
const PlaylistCard = styled.div`
  width: 603px;
  height: 200px;
  margin-top: 36px;
  padding: 19px 26px 0 23px;
  display: flex;
  align-items: flex-start;
  justify-content: space-between;
  border: 1px solid #e2e2e2;
  border-radius: 18px;
  font-size: 28px;
  font-weight: 700;
  line-height: 42px;
  letter-spacing: -1px;
  word-spacing: 0.5px;
  white-space: nowrap;
  svg { margin-top: 22px; }
`;
const Scrollbar = styled.div`
  width: 26px;
  display: flex;
  flex-direction: column;
  align-items: center;
  justify-content: space-between;
  background: #fff;
  padding: 8px 0 7px;
`;
const Thumb = styled.div`
  width: 26px;
  height: 92px;
  margin: 9px 0 auto;
  background: #606060;
`;

/* ---------- windows 10 taskbar ---------- */
const Taskbar = styled.div`
  height: 60px;
  flex: none;
  display: flex;
  align-items: center;
  padding-left: 1.500px;
  background: linear-gradient(90deg, #22373f 0, #213640 55%, #1e2f41 75%, #1a2742 88%, #1b2741 100%);
`;
const SysButton = styled.div`
  width: ${(p) => p.$w}px;
  height: 60px;
  flex: none;
  display: flex;
  align-items: center;
  justify-content: center;
`;
const Apps = styled.div`
  display: flex;
  margin-left: 2px;
`;
const AppButton = styled.div`
  width: 75px;
  height: 60px;
  flex: none;
  display: grid;
  grid-template-rows: 57px 3px;
  place-items: center;
  padding: 0 ${(p) => (p.$active ? 1 : 0)}px;
`;
const AppFace = styled.div`
  width: 100%;
  height: 57px;
  display: flex;
  align-items: center;
  justify-content: center;
  padding-top: 3px;
  ${(p) => p.$active && css`background: linear-gradient(90deg, #50636b 66px, #35464e 66px, #35464e 68px, #4a5c65 68px);`}
`;
const Running = styled.div`
  width: ${(p) => (p.$active ? 73 : 61)}px;
  height: 3px;
  background: ${(p) => (p.$mode === 0 ? "transparent" : p.$mode === 2 ? "linear-gradient(90deg, #76b9ed 47px, #5987ad 47px)" : "#76b9ed")};
`;
const Tray = styled.div`
  margin-left: auto;
  display: flex;
  align-items: center;
  color: #fff;
`;
const TrayIcons = styled.div`
  display: flex;
  align-items: center;
  gap: 15px;
`;
const Clock = styled.div`
  width: 106px;
  margin-left: 5px;
  text-align: center;
  font-size: 17.5px;
  line-height: 28px;
  letter-spacing: -0.55px;
`;
const NoticeBox = styled.div`
  position: relative;
  width: 38px;
  height: 60px;
  margin: 0 18px 0 16px;
  padding-top: 18px;
`;
const Badge = styled.span`
  position: absolute;
  left: 11px;
  top: 29px;
  width: 28px;
  height: 26px;
  border: 1px solid #8a8f98;
  border-radius: 50%;
  background: #30343c;
  font-size: 16px;
  font-weight: 600;
  line-height: 23px;
  letter-spacing: -0.6px;
  text-align: center;
`;
const PeekEdge = styled.div`
  width: 7px;
  height: 60px;
  border-left: 1px solid #7d8698;
`;

const EdgeIcon = () => (
  <svg width="36" height="36" viewBox="0 0 36 36">
    <defs><linearGradient id="eg1" x1="0" x2="1"><stop offset="0" stopColor="#2aa8e0" /><stop offset="1" stopColor="#6fe04a" /></linearGradient><linearGradient id="eg2" x1="0" y1="0" x2="0" y2="1"><stop offset="0" stopColor="#1d9be0" /><stop offset="1" stopColor="#0d62b8" /></linearGradient></defs>
    <path d="M1 14Q4 0 19 0q16 1 17 14 0 9-9 10-8 0-6-4 2-7-5-9Q6 9 1 14z" fill="url(#eg1)" />
    <path d="M0 18Q1 10 10 10q9 0 11 7-9-2-8 8 2 9 11 10Q17 37 9 34 0 29 0 18z" fill="url(#eg2)" />
    <path d="M13 20q1 9 11 9 5 0 9-2-5 9-14 9-9-2-9-12 1-3 3-4z" fill="#104a91" />
  </svg>
);
const Explorer = () => <svg width="33" height="28" viewBox="0 0 33 28"><path d="M0 1h11l3 3h5v8H0z" fill="#d99a10" /><path d="M0 5h33v21H0z" fill="#fccf55" /><path d="M6 14h21v13h-6v-7h-9v7H6z" fill="#3c8edc" /></svg>;
const Store = () => <svg width="36" height="38" viewBox="0 0 36 38"><path d="M9 10V3h18v7" stroke="#2cb4e8" strokeWidth="2" fill="none" /><path d="M0 8h36v25q0 4-4 4H4q-4 0-4-4z" fill="#f1f3f4" /><path d="M10 14h7v7h-7z" fill="#f25022" /><path d="M19 14h7v7h-7z" fill="#7fba00" /><path d="M10 23h7v7h-7z" fill="#00a4ef" /><path d="M19 23h7v7h-7z" fill="#ffb900" /></svg>;
const Burst = () => <svg width="36" height="36" viewBox="-18 -18 36 36">{[0, 40, 80, 120, 160, 200, 240, 280, 320].map((a) => <g key={a} transform={`rotate(${a})`}><path d="M-1-5l-2-12 6-1v11z" fill="#19b0b4" /><path d="M-1-5l-2-12 2.500 0z" fill="#d9f3f3" /></g>)}</svg>;
const Outlook = () => <svg width="40" height="40" viewBox="0 0 40 40"><rect x="9" y="2" width="26" height="34" rx="2" fill="#1066b8" /><path d="M17 2h9v12h-9z" fill="#1f7fd0" /><path d="M26 2h9v12h-9z" fill="#31a0ec" /><path d="M18 8h8v10h-8z" fill="#1b78cf" /><path d="M26 8h9v12h-9z" fill="#4fc9f8" /><path d="M26 20h9v14h-9z" fill="#1581d8" /><rect x="0" y="10" width="18" height="19" rx="2" fill="#0f5fc0" /><ellipse cx="9" cy="19.500" rx="4" ry="4.800" fill="none" stroke="#fff" strokeWidth="2.500" /><path d="M17 25h22v16H17z" fill="#e8b26c" /><path d="M19 27l9 9 9-9" stroke="#fff" strokeWidth="1.500" fill="none" /></svg>;
const Slack = () => <svg width="35" height="35" viewBox="0 0 35 35"><circle cx="17.500" cy="17.500" r="17.500" fill="#fff" /><g strokeWidth="4.800" strokeLinecap="round"><path d="M14.500 8v.1M8 14.500h6.500" stroke="#36c5f0" /><path d="M20.500 8v6.500M27 14.500v.1" stroke="#2eb67d" /><path d="M20.500 20.500H27M20.500 27v.1" stroke="#ecb22e" /><path d="M14.500 20.500V27M8 20.500v.1" stroke="#e01e5a" /></g></svg>;
const Notepad = () => <svg width="34" height="34" viewBox="0 0 34 34"><defs><linearGradient id="nt" x1="0" y1="1" x2="1" y2="0"><stop offset="0" stopColor="#2a7c8c" /><stop offset=".5" stopColor="#8fd0dc" /><stop offset="1" stopColor="#c9edf3" /></linearGradient></defs><path d="M28 4l4 1v24l-5 2z" fill="#c49038" /><path d="M12 3l19 1-3 29-16-5z" fill="#e9f0f2" /><path d="M12 3l16 1-6 27L0 25z" fill="url(#nt)" /><path d="M12 2.500l18 1.500" stroke="#aab6ba" strokeWidth="3" strokeDasharray="2 1" /></svg>;
const UsbIcon = () => <svg width="33" height="35" viewBox="0 0 33 35"><defs><linearGradient id="us" x1="0" y1="0" x2="1" y2="1"><stop offset="0" stopColor="#fa4d6c" /><stop offset=".5" stopColor="#c86ad8" /><stop offset="1" stopColor="#2bb4fa" /></linearGradient></defs><ellipse cx="16.500" cy="17.500" rx="15.500" ry="16.500" fill="#f6f6fa" stroke="url(#us)" strokeWidth="2" /><path d="M16 10v15M16 22l-7-4v-3M16 20l6-3v-2" stroke="#a45cd8" strokeWidth="2" fill="none" /><path d="M13 10.500L16 5.500l3 5z" fill="#fb4a60" /><circle cx="16" cy="27" r="2.500" fill="#2b9ef8" /><circle cx="9" cy="14.500" r="2" fill="#e2569f" /><path d="M20.500 12.500h3.500v3.500h-3.500z" fill="#8c65e0" /></svg>;

const apps = [[<EdgeIcon />, 0], [<Explorer />, 1], [<Store />, 0], [<Burst />, 1], [<Outlook />, 1], [<Chrome />, 2], [<Slack />, 1], [<Firefox size={35} h={35} />, 1, true], [<Notepad />, 2], [<UsbIcon />, 1], [<NppIcon size={34} />, 1], [<Eclipse />, 1]];

const SystemTaskbar = () => (
  <Taskbar>
    <SysButton $w={69}><svg width="24" height="24" viewBox="0 0 24 24" fill="#fff"><path d="M0 3.400L9.800 2v9.400H0zM10.800 1.900L24 0v11.400H10.800zM0 12.500h9.800V22L0 20.600zM10.800 12.500H24V24l-13.200-1.900z" /></svg></SysButton>
    <SysButton $w={73}><Icon w={32} h={33} stroke="#fff" sw={2.800}><circle cx="20" cy="13" r="12" /><path d="M11 22L1 32" /></Icon></SysButton>
    <SysButton $w={73}><Icon w={24} h={24} stroke="#fff" sw={1.400} strokeLinecap="butt"><path d="M.7 0v3.500h15V0M.7 24v-3.500h15V24M.7 7h15v10H.7zM21.500 0v5M21.500 12v12" /><path d="M20 8h3v3h-3z" fill="#fff" strokeWidth="0" /></Icon></SysButton>
    <Apps>
      {apps.map(([icon, mode, active], i) => (
        <AppButton key={i} $active={active}>
          <AppFace $active={active}>{icon}</AppFace>
          <Running $mode={mode} $active={active} />
        </AppButton>
      ))}
    </Apps>
    <Tray>
      <TrayIcons>
        <Icon w={18} h={9} stroke="#fff" sw={1.500}><path d="M0 9l9-9 9 9" /></Icon>
        <Icon w={24} h={13} stroke="#fff" sw={1.300}><path d="M.7.7h20.600v11.600H.7zM23 4v5" /><path d="M3 3h8v7H3z" fill="#fff" /></Icon>
        <Icon w={19} h={18} stroke="#fff" sw={1.400}><path d="M1 17Q1 2 18 0" opacity=".6" /><path d="M5 17Q6 6 18 5M10 17q0-7 8-7M14 17q0-2 4-3" /><circle cx="17.500" cy="16.500" r="1" /></Icon>
        <Icon w={23} h={18} stroke="#fff" sw={1.300}><path d="M1 6v6h3l5 5V1L4 6z" /><path d="M12 6q2 3 0 6" /><path d="M16 4q3 5 0 10M20 1q4 8 0 16" opacity=".55" /></Icon>
      </TrayIcons>
      <Clock>6:47 PM<br />11/18/2023</Clock>
      <NoticeBox>
        <svg width="27" height="24" viewBox="0 0 27 24"><path d="M0 0h27v19H15l-5 5v-5H0z" fill="#fff" /><path d="M5 5h16M5 9h16M5 13h11" stroke="#1b2741" strokeWidth="1.500" /></svg>
        <Badge>81</Badge>
      </NoticeBox>
      <PeekEdge />
    </Tray>
  </Taskbar>
);

export default function App() {
  return (
    <Screen>
      <Global />
      <Tabs />
      <Navigation />
      <Content>
        <Page>
          <Header />
          <Video />
          <Below>
            <VideoTitle>
              Selenium Frameworks | Data-Driven | PART - 4 | Data providers &amp; Excel<br />Workbook | Using JXL library
            </VideoTitle>
            <PlaylistCard>
              04-Data Driven Framework in Tamil
              <Icon w={26} h={14} stroke="#0f0f0f" sw={1.600}><path d="M0 0l13 13L26 0" /></Icon>
            </PlaylistCard>
          </Below>
        </Page>
        <Scrollbar>
          <Icon w={13} h={9} stroke="#505050" sw={3} strokeLinecap="butt"><path d="M1 8l5.500-6L12 8" /></Icon>
          <Thumb />
          <Icon w={13} h={9} stroke="#505050" sw={3} strokeLinecap="butt"><path d="M1 1l5.500 6L12 1" /></Icon>
        </Scrollbar>
      </Content>
      <SystemTaskbar />
    </Screen>
  );
}
